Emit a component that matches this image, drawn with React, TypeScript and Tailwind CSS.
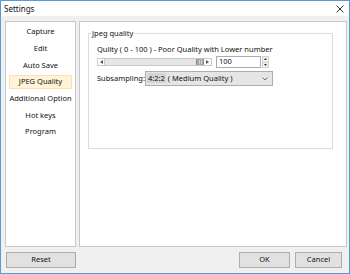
import React from "react";

const menu = ["Capture", "Edit", "Auto Save", "JPEG Quality", "Additional Option", "Hot keys", "Program"];

export default function App() {
  return (
    <div className="w-[350px] h-[274px] border border-[#5b9bd5] bg-[#f0f0f0] flex flex-col text-[7.5px] text-[#111] font-['Noto_Sans',sans-serif] overflow-hidden">
      {/* title bar */}
      <div className="h-[15px] bg-white flex items-center justify-between pl-[3px] pr-[4px] shrink-0">
        <span className="text-[8px]">Settings</span>
        <svg width="8" height="8" viewBox="0 0 8 8" className="mr-[1px]">
          <path d="M0.5 0.5 L7.5 7.5 M7.5 0.5 L0.5 7.5" stroke="#333" strokeWidth="1" />
        </svg>
      </div>

      <div className="flex gap-[3px] pl-[4px] pr-[2px] pt-[5px] h-[231px] shrink-0">
        {/* left list */}
        <div className="w-[71px] bg-white border border-[#c8c8c8] flex flex-col items-center pt-[2px] px-[3px]">
          {menu.map((m) => (
            <div
              key={m}
              className={
                m === "JPEG Quality"
                  ? "w-full h-[14px] my-[1px] flex items-center justify-center bg-[#fff4d8] border border-[#ffe0a8]"
                  : "w-full h-[14px] my-[1px] flex items-center justify-center"
              }
              style={{ marginBottom: 1.67 }}
            >
              {m}
            </div>
          ))}
        </div>

        {/* right panel */}
        <div className="flex-1 bg-white border border-[#c8c8c8] pt-[11px] pl-[8px] pr-[13px]">
          <div className="relative h-[116px] border border-[#dcdcdc] pl-[8px] pt-[10px]">
            <span className="absolute -top-[6px] left-[2px] bg-white px-[1px] leading-[10px]">Jpeg quality</span>
            <div className="leading-[10px]">Qulity ( 0 - 100 ) - Poor Quality with Lower number</div>
            <div className="flex items-center mt-[2px] h-[12px]">
              {/* slider */}
              <div className="flex h-[8px] w-[115px] border border-[#c8c8c8] bg-[#e8e8e8]">
                <div className="w-[7px] h-full bg-white border-r border-[#c8c8c8] flex items-center justify-center">
                  <svg width="3" height="4" viewBox="0 0 3 4"><path d="M3 0 L0 2 L3 4 Z" fill="#555" /></svg>
                </div>
                <div className="flex-1 bg-[#e6e6e6]" />
                <div className="w-[8px] h-full bg-[#a8a8a8] border-x border-[#8a8a8a] flex items-center justify-center gap-[1px]">
                  <div className="w-px h-[4px] bg-[#d0d0d0]" />
                  <div className="w-px h-[4px] bg-[#d0d0d0]" />
                </div>
                <div className="w-[7px] h-full bg-white flex items-center justify-center">
                  <svg width="3" height="4" viewBox="0 0 3 4"><path d="M0 0 L3 2 L0 4 Z" fill="#555" /></svg>
                </div>
              </div>
              {/* number input */}
              <div className="ml-[4px] w-[45px] h-[12px] border border-[#acacac] bg-white flex items-center pl-[2px]">100</div>
              <div className="ml-[1px] w-[7px] h-[12px] flex flex-col">
                <div className="flex-1 border border-[#d0d0d0] bg-[#f4f4f4] flex items-center justify-center">
                  <svg width="3" height="2" viewBox="0 0 3 2"><path d="M0 2 L1.5 0 L3 2 Z" fill="#333" /></svg>
                </div>
                <div className="flex-1 border border-t-0 border-[#d0d0d0] bg-[#f4f4f4] flex items-center justify-center">
                  <svg width="3" height="2" viewBox="0 0 3 2"><path d="M0 0 L1.5 2 L3 0 Z" fill="#333" /></svg>
                </div>
              </div>
            </div>
            <div className="flex items-center mt-[3px]">
              <span className="w-[48px]">Subsampling:</span>
              <div className="w-[128px] h-[15px] border border-[#adadad] bg-[#e5e5e5] flex items-center justify-between pl-[1px] pr-[4px]">
                <span>
                  <span className="bg-[#d4d4d4] px-[1px]">4:2:2</span> ( Medium Quality )
                </span>
                <svg width="6" height="4" viewBox="0 0 6 4"><path d="M0.5 0.5 L3 3 L5.5 0.5" stroke="#555" fill="none" strokeWidth="0.8" /></svg>
              </div>
            </div>
          </div>
        </div>
      </div>

      {/* buttons */}
      <div className="flex items-center pl-[5px] pr-[7px] pt-[5px]">
        <button className="w-[70px] h-[16px] border border-[#adadad] bg-[#e1e1e1]">Reset</button>
        <div className="flex-1" />
        <button className="w-[51px] h-[16px] border border-[#adadad] bg-[#e1e1e1]">OK</button>
        <button className="ml-[5px] w-[47px] h-[16px] border border-[#adadad] bg-[#e1e1e1]">Cancel</button>
      </div>
    </div>
  );
}
